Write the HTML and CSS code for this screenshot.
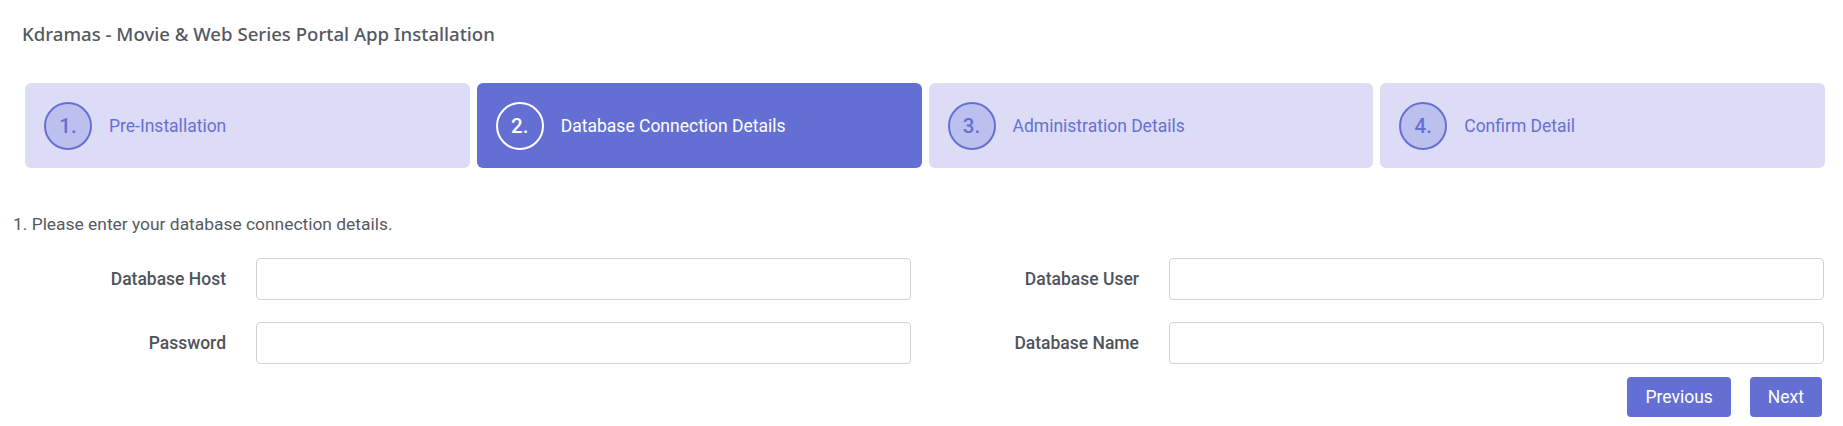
FILE: index.html
```html
<!DOCTYPE html>
<html lang="en">
<head>
<meta charset="utf-8">
<title>Kdramas Installation</title>
<link rel="stylesheet" href="styles.css">
</head>
<body>
<div class="page">
  <h1 class="title">Kdramas - Movie &amp; Web Series Portal App Installation</h1>

  <div class="steps">
    <div class="step">
      <span class="step-num">1.</span>
      <span class="step-label">Pre-Installation</span>
    </div>
    <div class="step step-active">
      <span class="step-num">2.</span>
      <span class="step-label">Database Connection Details</span>
    </div>
    <div class="step">
      <span class="step-num">3.</span>
      <span class="step-label">Administration Details</span>
    </div>
    <div class="step">
      <span class="step-num">4.</span>
      <span class="step-label">Confirm Detail</span>
    </div>
  </div>

  <p class="intro">1. Please enter your database connection details.</p>

  <form class="form">
    <div class="field">
      <label class="field-label" for="host">Database Host</label>
      <div class="field-input"><input id="host" type="text"></div>
    </div>
    <div class="field">
      <label class="field-label" for="user">Database User</label>
      <div class="field-input"><input id="user" type="text"></div>
    </div>
    <div class="field">
      <label class="field-label" for="pass">Password</label>
      <div class="field-input"><input id="pass" type="password"></div>
    </div>
    <div class="field">
      <label class="field-label" for="dbname">Database Name</label>
      <div class="field-input"><input id="dbname" type="text"></div>
    </div>
  </form>

  <div class="actions">
    <button class="btn" type="button">Previous</button>
    <button class="btn" type="button">Next</button>
  </div>
</div>
</body>
</html>
```

FILE: styles.css
```css
* { box-sizing: border-box; }

html, body {
  margin: 0;
  padding: 0;
  background: #ffffff;
}

body {
  font-family: Roboto, "Liberation Sans", sans-serif;
  color: #555a62;
}

.page {
  width: 1843px;
  height: 426px;
  overflow: hidden;
}

.title {
  margin: 0;
  padding: 22px 0 0 22px;
  font-family: "Noto Sans", "Open Sans", sans-serif;
  font-weight: 500;
  font-size: 18.6px;
  line-height: 24px;
  color: #535862;
}

.steps {
  display: grid;
  grid-template-columns: repeat(4, 1fr);
  gap: 7px;
  margin: 37px 18px 0 25px;
}

.step {
  display: flex;
  align-items: center;
  gap: 17px;
  height: 85px;
  padding-left: 19px;
  border-radius: 6px;
  background: #dcdcf6;
  color: #6670d4;
}

.step-num {
  display: flex;
  align-items: center;
  justify-content: center;
  width: 48px;
  height: 48px;
  border-radius: 50%;
  border: 2px solid #6670d4;
  background: #bcc0ee;
  font-size: 20.5px;
  font-weight: 500;
  flex: none;
}

.step-label {
  font-size: 17.5px;
  white-space: nowrap;
}

.step-active {
  background: #646fd4;
  color: #ffffff;
}

.step-active .step-num {
  background: transparent;
  border-color: #ffffff;
}

.intro {
  margin: 45px 0 0 13px;
  font-size: 17.4px;
  line-height: 22px;
  color: #555a62;
}

.form {
  display: grid;
  grid-template-columns: 913px 913px;
  row-gap: 22px;
  margin: 23px 0 0 13px;
}

.field {
  display: grid;
  grid-template-columns: 228px 1fr;
  align-items: center;
}

.field-label {
  text-align: right;
  padding-right: 15px;
  font-size: 17.5px;
  font-weight: 500;
  color: #4f535a;
}

.field-input {
  padding: 0 15px;
}

.field-input input {
  display: block;
  width: 100%;
  height: 42px;
  border: 1px solid #cfd3da;
  border-radius: 4px;
  background: #ffffff;
  font: inherit;
  outline: none;
}

.actions {
  display: flex;
  justify-content: flex-end;
  gap: 19px;
  margin: 13px 21px 0 0;
}

.btn {
  height: 40px;
  padding: 0 18px;
  border: none;
  border-radius: 4px;
  background: #646fd4;
  color: #ffffff;
  font-family: Roboto, "Liberation Sans", sans-serif;
  font-size: 17.5px;
  cursor: pointer;
}
```
